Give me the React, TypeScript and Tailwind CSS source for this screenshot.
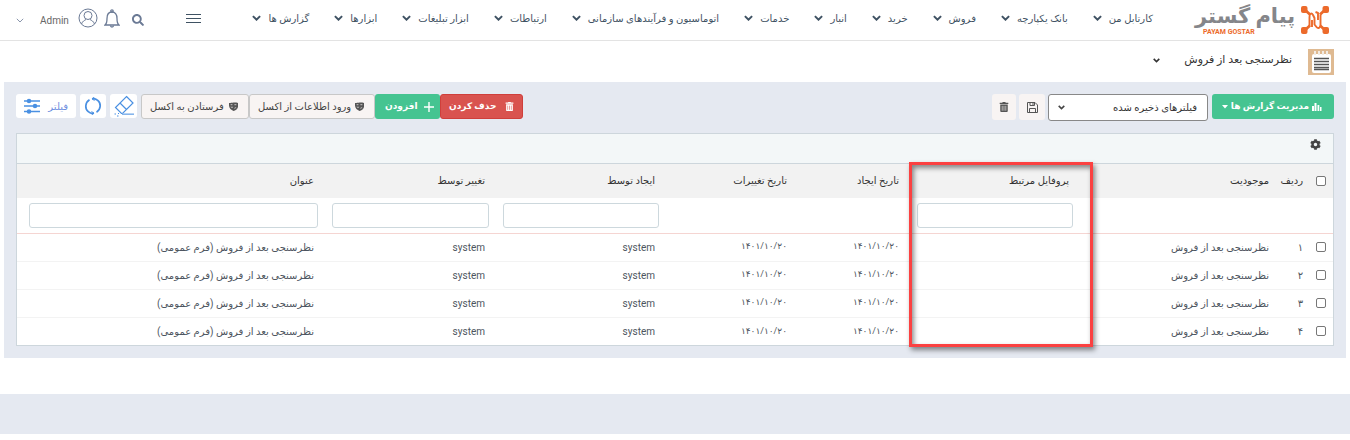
import type { ReactNode } from "react";
import { FaSearch, FaCog, FaTrashAlt } from "react-icons/fa";

const navItems = [
  "کارتابل من",
  "بانک یکپارچه",
  "فروش",
  "خرید",
  "انبار",
  "خدمات",
  "اتوماسیون و فرآیندهای سازمانی",
  "ارتباطات",
  "ابزار تبلیغات",
  "ابزارها",
  "گزارش ها",
];

const rows = ["۱", "۲", "۳", "۴"];

function Chevron({ className = "" }: { className?: string }) {
  return (
    <svg viewBox="0 0 10 7" className={className} fill="none" stroke="currentColor" aria-hidden="true">
      <path d="M1 1.2 5 5.2 9 1.2" strokeWidth="2.2" />
    </svg>
  );
}

function Logo() {
  return (
    <a href="#" className="flex w-[134px] shrink-0 items-center justify-between" aria-label="پیام گستر">
      <svg viewBox="0 0 28 28" className="size-7" fill="none" stroke="#ec6a2b" strokeLinejoin="round" aria-hidden="true">
        <path d="M3 3 9 8.500M25 3l-6 5.500M3 25l6-5.500M25 25l-6-5.500" strokeWidth="2.800" />
        <path d="M8.500 20v-9c0-3.500 2-4.500 3.500-2l1.500 3v6.500l2 2.500c1.500 2 4 1 4-2V8.500M11 14v7M17 14V7l-2.500-1" strokeWidth="1.900" />
        <g fill="#ec6a2b" stroke="none">
          <rect x="0" y="0" width="6.500" height="7" rx="2" />
          <rect x="21.500" y="0" width="6.500" height="7" rx="2" />
          <rect x="0" y="21" width="6.500" height="7" rx="2" />
          <rect x="21.500" y="21" width="6.500" height="7" rx="2" />
        </g>
      </svg>
      <span className="flex flex-col">
        <span className="text-[21px] leading-6 font-bold whitespace-nowrap text-[#85868a]">پیام گستر</span>
        <span dir="ltr" className="self-end pl-2 font-[Roboto] text-[7px] leading-2 font-bold text-[#ec6a2b]">PAYAM GOSTAR</span>
      </span>
    </a>
  );
}

function ShieldIcon() {
  return (
    <svg viewBox="0 0 10 10" className="size-[9px] text-[#555]" fill="currentColor" aria-hidden="true">
      <path d="M0 1c3 .5 5-1 10 0v4.500C9.500 8 7 9.500 5 10 2.500 9 0 7 0 4Z" />
      <path d="M1.800 3h2M6 3h2.200M2 5.500c1.500 1 2.500 0 2.500 0M6 7c1-1 2-.5 2-.5" fill="none" stroke="#f8f4f3" strokeWidth=".8" />
    </svg>
  );
}

function Th({ children }: { children?: ReactNode }) {
  return <th className="px-[11px] pb-[2px] text-right font-normal">{children}</th>;
}

function FilterCell({ label }: { label: string }) {
  return (
    <td className="px-[7px]">
      <input type="text" aria-label={label} className="block h-[25px] w-full rounded-[3px] border border-[#cdd8dd] bg-white px-2" />
    </td>
  );
}

function Check({ label }: { label: string }) {
  return (
    <input
      type="checkbox"
      aria-label={label}
      className="mx-auto block size-[10px] appearance-none rounded-[2px] border border-[#777] bg-white checked:bg-[#41c391]"
    />
  );
}

export default function App() {
  return (
    <div dir="rtl" className="bg-white font-[Roboto,'DejaVu_Sans',sans-serif] text-[10px] text-[#444]">
      <header className="flex h-[41px] items-center border-b border-[#e3e3e3] pr-[21px] pl-4 text-[#3f5263]">
        <Logo />
        <nav className="mr-[42px] flex items-center gap-[25px]">
          {navItems.map((item) => (
            <button key={item} type="button" className="flex items-center gap-[7px] pb-1 whitespace-nowrap">
              {item}
              <Chevron className="w-[9px]" />
            </button>
          ))}
        </nav>
        <button type="button" aria-label="منو" className="mr-auto flex w-[15px] flex-col gap-[3px] pb-1">
          <span className="h-px w-full bg-[#3f5263]" />
          <span className="h-px w-full bg-[#3f5263]" />
          <span className="h-px w-full bg-[#3f5263]" />
        </button>
        <div className="mr-[42px] flex items-center text-[#6b7a95]">
          <button type="button" aria-label="جستجو"><FaSearch className="size-3" /></button>
          <button type="button" aria-label="اعلان ها" className="mr-3 pb-1">
            <svg viewBox="0 0 16 19" className="h-[19px] w-4" fill="none" stroke="currentColor" strokeWidth="1.300" aria-hidden="true">
              <path d="M1 16h14c-2-1.500-2-3-2-6.500 0-4-2-6.500-5-6.500S3 5.500 3 9.500C3 13 3 14.500 1 16Z" />
              <circle cx="8" cy="2" r="1.200" />
              <path d="M6.500 16.500a1.500 1.500 0 0 0 3 0" />
            </svg>
          </button>
          <button type="button" className="mr-[6px] flex items-center">
            <svg viewBox="0 0 20 20" className="mb-1 size-5" fill="none" stroke="currentColor" strokeWidth="1" aria-hidden="true">
              <circle cx="10" cy="10" r="9" />
              <circle cx="10" cy="7.500" r="4" />
              <path d="M3.500 16c1-3 3-3.500 4.500-4.500M16.500 16c-1-3-3-3.500-4.500-4.500" />
            </svg>
            <span className="mr-[9px] text-[10px] text-[#666]">Admin</span>
            <svg viewBox="0 0 10 6" className="mr-4 w-2" fill="none" stroke="currentColor" aria-hidden="true"><path d="M1 1l4 4 4-4" /></svg>
          </button>
        </div>
      </header>

      <div className="flex h-[41px] items-center gap-4 pr-4">
        <svg viewBox="0 0 26 26" className="size-[26px]" aria-hidden="true">
          <path fill="#dfba92" d="M0 0h26v26H0z" />
          <rect x="4" y="5" width="19" height="19" rx="2" fill="#fff" />
          <path d="M7 2v4M11 2v4M15 2v4M19 2v4" stroke="#f3ece4" strokeWidth="2" />
          <path d="M6 9.500h15M6 12.500h15M6 15.500h15M6 18.500h15M6 20.500h15" stroke="#555" strokeWidth="1.300" />
        </svg>
        <button type="button" className="flex items-center gap-6 pb-[2px] text-[11px] text-[#333]">
          نظرسنجی بعد از فروش
          <Chevron className="w-[7px]" />
        </button>
      </div>

      <main className="mx-1 bg-[#e5e9f1] p-3">
        <div className="flex items-start whitespace-nowrap">
          <button type="button" className="flex h-[25px] w-[122px] items-center justify-between rounded-[3px] bg-[#45c491] pr-3 pl-[10px] text-[9px] font-bold text-white">
            <svg viewBox="0 0 10 8" className="h-2 w-[10px]" fill="currentColor" aria-hidden="true"><path d="M0 3h2v5H0zM2.500 0h2v8h-2zM5.500 2h1.800v6H5.500zM8 4h1.500v4H8z" /></svg>
            مدیریت گزارش ها
            <svg viewBox="0 0 6 4" className="w-[6px]" fill="currentColor" aria-hidden="true"><path d="M0 0h6L3 3.500z" /></svg>
          </button>
          <div className="relative mr-1">
            <select aria-label="فیلترهای ذخیره شده" className="block h-[27px] w-40 appearance-none rounded-[3px] border border-[#888] bg-white pr-[10px] text-[#333]">
              <option>فیلترهای ذخیره شده</option>
            </select>
            <Chevron className="pointer-events-none absolute top-[11px] left-[10px] w-[7px]" />
          </div>
          <button type="button" aria-label="ذخیره فیلتر" className="mr-[3px] flex h-[26px] w-[26px] items-center justify-center rounded-[3px] bg-[#f8f4f3] text-[#555]">
            <svg viewBox="0 0 11 11" className="size-[11px]" fill="none" stroke="currentColor" aria-hidden="true">
              <path d="M.5.500h7.500l2.500 2.500v7.500H.5ZM2.500 10.500V6.500h6v4M3 .5v3h4.500v-3M6 1v2" />
            </svg>
          </button>
          <button type="button" aria-label="حذف فیلتر" className="mr-[3px] flex h-[26px] w-6 items-center justify-center rounded-[3px] bg-[#f8f4f3] text-[#555]">
            <FaTrashAlt className="size-[10px]" />
          </button>

          <div className="mr-auto flex">
            <button type="button" className="flex h-[25px] w-[83px] items-center justify-between rounded-[3px] border border-[#cf3f3b] bg-[#d9534f] px-2 text-[9px] font-bold text-white">
              <FaTrashAlt className="size-[9px]" />
              حذف کردن
            </button>
            <button type="button" className="flex h-[25px] w-[65px] items-center justify-between rounded-[3px] bg-[#45c491] pr-[6px] pl-[10px] text-[9px] font-bold text-white">
              <svg viewBox="0 0 10 10" className="size-[10px] shrink-0" stroke="currentColor" strokeWidth="1.400" aria-hidden="true"><path d="M5 0v10M0 5h10" /></svg>
              افزودن
            </button>
            <button type="button" className="flex h-[25px] w-[126px] items-center justify-between rounded-[3px] border border-[#c8c8c8] bg-[#f8f4f3] pr-[10px] pl-2">
              <ShieldIcon />
              ورود اطلاعات از اکسل
            </button>
            <button type="button" className="flex h-[25px] w-[108px] items-center justify-between rounded-[3px] border border-[#c8c8c8] bg-[#f8f4f3] pr-[10px] pl-2">
              <ShieldIcon />
              فرستادن به اکسل
            </button>
            <button type="button" aria-label="پاک کردن" className="mr-1 flex h-6 w-[27px] items-center justify-center rounded-[3px] bg-white text-[#4a90e2]">
              <svg viewBox="0 0 20 22" className="h-[22px] w-5" fill="none" stroke="currentColor" strokeWidth="1.200" aria-hidden="true">
                <path d="M12.500 1.500 19 8 8.500 18.500H7.500L1.500 12.500ZM6 8l6.500 6.500" />
                <path d="M8 19.200h12" strokeWidth="1.600" stroke="#86b5ec" />
                <path d="M.5 19h1.500M3 21h1.500M4 18.500h1" />
              </svg>
            </button>
            <button type="button" aria-label="بازخوانی" className="mr-1 flex h-6 w-[26px] items-center justify-center rounded-[3px] bg-white text-[#4a90e2]">
              <svg viewBox="0 0 18 18" className="size-[18px]" fill="none" stroke="currentColor" strokeWidth="1.700" aria-hidden="true">
                <path d="M8 1.800C12 1 16.500 4.500 16.200 9c-.2 3-1.700 5-3.700 6.200M10 16.200C6 17 1.500 13.500 1.800 9c.2-3 1.700-5 3.700-6.200" />
                <path d="M10.500 0 8 1.800l2.500 1.700M7.500 18l2.500-1.800L7.500 14.500" strokeWidth="1" />
              </svg>
            </button>
            <button type="button" className="mr-1 flex h-6 w-[60px] items-center justify-between rounded-[3px] bg-white px-2 text-[#6f8fe0]">
              فیلتر
              <svg viewBox="0 0 16 16" className="size-4 text-[#4a90e2]" fill="currentColor" stroke="currentColor" strokeWidth="1.500" aria-hidden="true">
                <path d="M0 3h16M0 8h16M0 13.500h16" />
                <circle cx="5" cy="3" r="1.500" /><circle cx="11" cy="8" r="1.500" /><circle cx="5" cy="13.500" r="1.500" />
              </svg>
            </button>
          </div>
        </div>

        <section className="relative mt-3 border border-[#cdd6dc] bg-white">
          <div className="flex h-[30px] items-center border-b border-[#cdd6dc] bg-[#f3f7f8] pr-3 pb-2">
            <button type="button" aria-label="تنظیمات"><FaCog className="size-[11px] text-[#444]" /></button>
          </div>
          <table className="w-full table-fixed border-collapse">
            <colgroup>
              <col className="w-[24px]" />
              <col className="w-[29px]" />
              <col className="w-[200px]" />
              <col className="w-[170px]" />
              <col className="w-[112px]" />
              <col className="w-[132px]" />
              <col className="w-[170px]" />
              <col className="w-[171px]" />
              <col />
            </colgroup>
            <thead>
              <tr className="h-[34px] bg-[#f2f2f2] text-[#333]">
                <th><Check label="انتخاب همه" /></th>
                <th className="px-[6px] pb-[2px] text-right font-normal whitespace-nowrap">ردیف</th>
                <Th>موجودیت</Th>
                <Th>پروفایل مرتبط</Th>
                <Th>تاریخ ایجاد</Th>
                <Th>تاریخ تغییرات</Th>
                <Th>ایجاد توسط</Th>
                <Th>تغییر توسط</Th>
                <Th>عنوان</Th>
              </tr>
              <tr className="h-[35px] border-b border-[#f5d5d2]">
                <td /><td /><td />
                <FilterCell label="پروفایل مرتبط" />
                <td /><td />
                <FilterCell label="ایجاد توسط" />
                <FilterCell label="تغییر توسط" />
                <td className="pr-[7px] pl-3">
                  <input type="text" aria-label="عنوان" className="block h-[25px] w-full rounded-[3px] border border-[#cdd8dd] bg-white px-2" />
                </td>
              </tr>
            </thead>
            <tbody className="text-[#4d5560]">
              {rows.map((n) => (
                <tr key={n} className="h-7 border-b border-[#f3f3f3] last:border-b-0">
                  <td><Check label={`انتخاب ردیف ${n}`} /></td>
                  <td className="px-[6px]">{n}</td>
                  <td className="px-[11px]">نظرسنجی بعد از فروش</td>
                  <td />
                  <td className="px-[11px] text-[9px]">۱۴۰۱/۱۰/۲۰</td>
                  <td className="px-[11px] text-[9px]">۱۴۰۱/۱۰/۲۰</td>
                  <td className="px-[11px]">system</td>
                  <td className="px-[11px]">system</td>
                  <td className="px-[11px]">نظرسنجی بعد از فروش (فرم عمومی)</td>
                </tr>
              ))}
            </tbody>
          </table>
          <div className="pointer-events-none absolute top-[28px] right-[240px] -bottom-[2px] w-[184px] border-3 border-[#fb4141] shadow-[2px_3px_5px_rgba(0,0,0,0.45),inset_2px_3px_5px_rgba(0,0,0,0.45)]" />
        </section>
      </main>
      <footer className="mt-9 h-10 bg-[#e5e9f1]" />
    </div>
  );
}
